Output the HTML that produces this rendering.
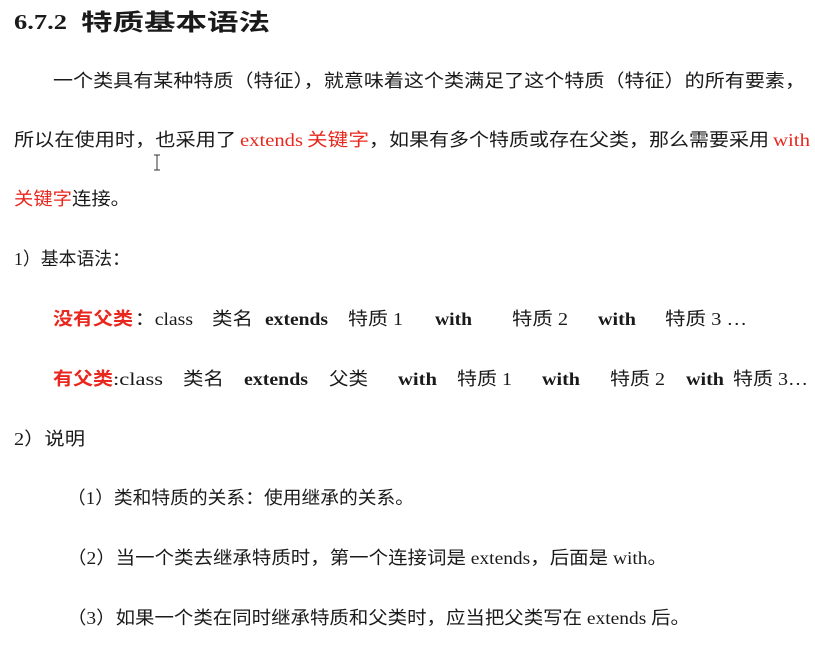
<!DOCTYPE html>
<html><head><meta charset="utf-8"><style>
html,body{margin:0;padding:0;background:#fff;width:815px;height:649px;overflow:hidden}
svg{display:block}
text{font-family:"Liberation Serif","Noto Sans CJK SC",serif;font-size:18px;fill:#1a1a1a}
.r{fill:#e8281e}
.b{font-weight:bold}
.s{font-family:"Liberation Serif","Noto Sans CJK SC",sans-serif}
</style></head><body>
<svg width="815" height="649" xmlns="http://www.w3.org/2000/svg">
<text x="14" y="29" class="b" style="font-size:21px" textLength="53" lengthAdjust="spacingAndGlyphs">6.7.2</text>
<text x="81" y="30" class="b s" style="font-size:23px" textLength="189" lengthAdjust="spacingAndGlyphs">特质基本语法</text>

<text x="53" y="87" class="s" textLength="752" lengthAdjust="spacingAndGlyphs">一个类具有某种特质（特征），就意味着这个类满足了这个特质（特征）的所有要素，</text>

<text x="14" y="146" class="s" textLength="222" lengthAdjust="spacingAndGlyphs">所以在使用时，也采用了</text>
<text x="240" y="146" class="r" textLength="63" lengthAdjust="spacingAndGlyphs">extends</text>
<text x="307" y="146" class="r s" textLength="62" lengthAdjust="spacingAndGlyphs">关键字</text>
<text x="369" y="146" class="s" textLength="400" lengthAdjust="spacingAndGlyphs">，如果有多个特质或存在父类，那么需要采用</text>
<text x="773" y="146" class="r" textLength="37" lengthAdjust="spacingAndGlyphs">with</text>
<path d="M154 155h6M157 155v15M154 170h6" stroke="#333" stroke-width="1" fill="none"/>

<text x="14" y="205" class="r s" textLength="58" lengthAdjust="spacingAndGlyphs">关键字</text>
<text x="72" y="205" class="s" textLength="58" lengthAdjust="spacingAndGlyphs">连接。</text>

<text x="14" y="265" class="s" textLength="116" lengthAdjust="spacingAndGlyphs">1）基本语法：</text>

<text x="53" y="325" class="r b s" textLength="80" lengthAdjust="spacingAndGlyphs">没有父类</text>
<text x="135" y="325" textLength="58" lengthAdjust="spacingAndGlyphs">：class</text>
<text x="212" y="325" class="s" textLength="41" lengthAdjust="spacingAndGlyphs">类名</text>
<text x="265" y="325" class="b" textLength="63" lengthAdjust="spacingAndGlyphs">extends</text>
<text x="348" y="325" textLength="55" lengthAdjust="spacingAndGlyphs">特质 1</text>
<text x="435" y="325" class="b" textLength="37" lengthAdjust="spacingAndGlyphs">with</text>
<text x="512" y="325" textLength="56" lengthAdjust="spacingAndGlyphs">特质 2</text>
<text x="598" y="325" class="b" textLength="38" lengthAdjust="spacingAndGlyphs">with</text>
<text x="665" y="325" textLength="82" lengthAdjust="spacingAndGlyphs">特质 3 …</text>

<text x="53" y="385" class="r b s" textLength="60" lengthAdjust="spacingAndGlyphs">有父类</text>
<text x="113" y="385" textLength="50" lengthAdjust="spacingAndGlyphs">:class</text>
<text x="183" y="385" class="s" textLength="41" lengthAdjust="spacingAndGlyphs">类名</text>
<text x="244" y="385" class="b" textLength="64" lengthAdjust="spacingAndGlyphs">extends</text>
<text x="329" y="385" class="s" textLength="39" lengthAdjust="spacingAndGlyphs">父类</text>
<text x="398" y="385" class="b" textLength="39" lengthAdjust="spacingAndGlyphs">with</text>
<text x="457" y="385" textLength="55" lengthAdjust="spacingAndGlyphs">特质 1</text>
<text x="542" y="385" class="b" textLength="38" lengthAdjust="spacingAndGlyphs">with</text>
<text x="610" y="385" textLength="55" lengthAdjust="spacingAndGlyphs">特质 2</text>
<text x="686" y="385" class="b" textLength="38" lengthAdjust="spacingAndGlyphs">with</text>
<text x="733" y="385" textLength="75" lengthAdjust="spacingAndGlyphs">特质 3…</text>

<text x="14" y="445" class="s" textLength="71" lengthAdjust="spacingAndGlyphs">2）说明</text>

<text x="67" y="504" class="s" textLength="347" lengthAdjust="spacingAndGlyphs">（1）类和特质的关系：使用继承的关系。</text>
<text x="67" y="564" class="s" textLength="600" lengthAdjust="spacingAndGlyphs">（2）当一个类去继承特质时，第一个连接词是 extends，后面是 with。</text>
<text x="67" y="624" class="s" textLength="623" lengthAdjust="spacingAndGlyphs">（3）如果一个类在同时继承特质和父类时，应当把父类写在 extends 后。</text>
</svg>
</body></html>
